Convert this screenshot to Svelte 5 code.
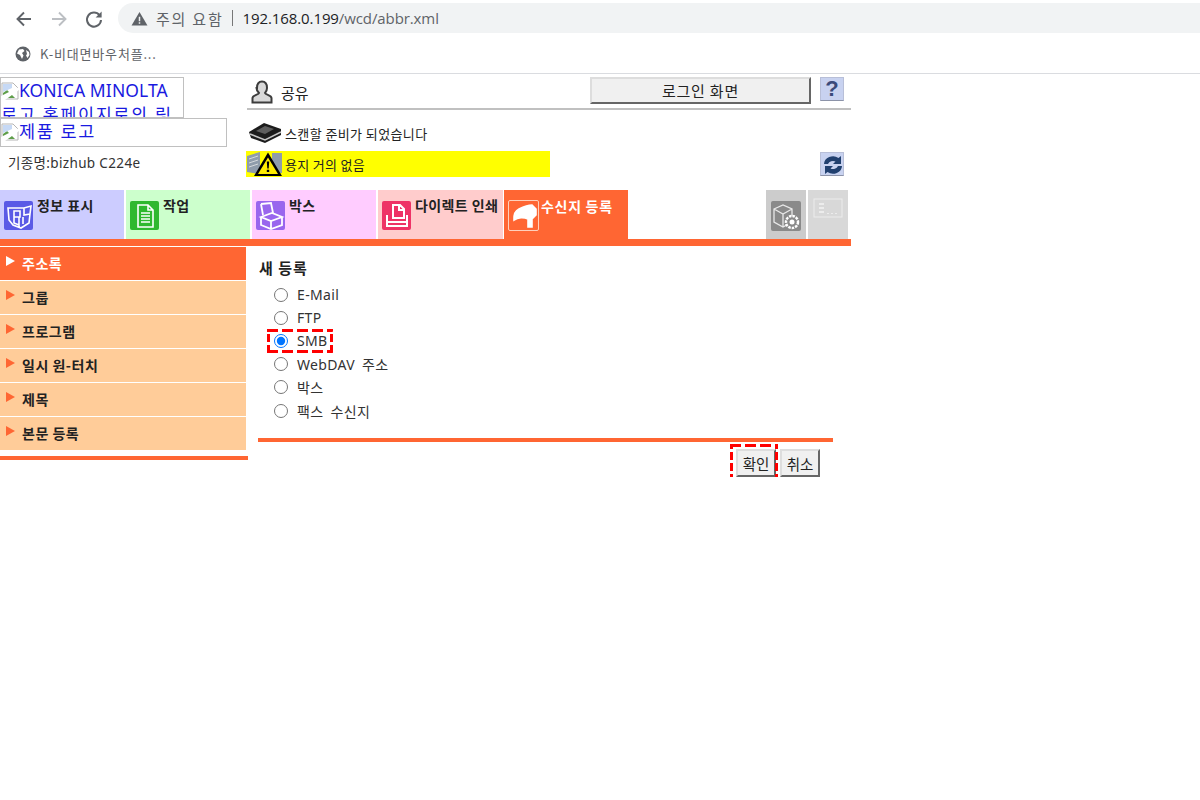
<script lang="ts">
    const tabs = [
        { label: "정보 표시", cls: "info", icon: "info" },
        { label: "작업", cls: "job", icon: "job" },
        { label: "박스", cls: "box", icon: "box" },
        { label: "다이렉트 인쇄", cls: "print", icon: "print" },
        { label: "수신지 등록", cls: "dest active", icon: "dest" },
    ];

    const menu = ["주소록", "그룹", "프로그램", "일시 원-터치", "제목", "본문 등록"];

    const destinations = [
        { label: "E-Mail", checked: false },
        { label: "FTP", checked: false },
        { label: "SMB", checked: true },
        { label: "WebDAV 주소", checked: false },
        { label: "박스", checked: false },
        { label: "팩스 수신지", checked: false },
    ];
</script>

{#snippet brokenImage()}
    <svg class="broken" viewBox="0 0 18 18" width="18" height="18" aria-hidden="true">
        <path d="M1 1h11l5 5v11H1z" fill="#fff" stroke="#b5b5b5" />
        <path d="M2 16v-5l4-3 3 3 5 5z" fill="#5f9e4a" />
        <path d="M2 2h9v4L2 10z" fill="#c6d9f5" />
        <path d="M0 14 L18 5 V8 L4 18 H0z" fill="#fff" />
    </svg>
{/snippet}

<header class="chrome">
    <div class="toolbar">
        <svg class="nav" viewBox="0 0 20 20" width="20" height="20" aria-hidden="true">
            <path d="M17 10H4M10 3.500 3.500 10l6.500 6.500" fill="none" stroke="#5f6368" stroke-width="1.900" />
        </svg>
        <svg class="nav" viewBox="0 0 20 20" width="20" height="20" aria-hidden="true">
            <path d="M3 10h13M10 3.500l6.500 6.500-6.500 6.500" fill="none" stroke="#bcbfc3" stroke-width="1.900" />
        </svg>
        <svg class="nav" viewBox="0 0 20 20" width="20" height="20" aria-hidden="true">
            <path d="M15.600 6.400A7 7 0 1 0 17 11" fill="none" stroke="#5f6368" stroke-width="2" />
            <path d="M17.600 2.600v6h-6z" fill="#5f6368" />
        </svg>
        <div class="omnibox">
            <svg viewBox="0 0 18 16" width="17" height="15" aria-hidden="true">
                <path d="M9 1 17.500 15.500H.5z" fill="#5f6368" />
                <path d="M8.200 6h1.600v5H8.200zM8.200 12h1.600v1.600H8.200z" fill="#f1f3f4" />
            </svg>
            <span class="warn">주의 요함</span>
            <span class="sep"></span>
            <span class="url">192.168.0.199<span class="path">/wcd/abbr.xml</span></span>
        </div>
    </div>
    <div class="bookmarks">
        <svg viewBox="0 0 16 16" width="16" height="16" aria-hidden="true">
            <circle cx="8" cy="8" r="7.500" fill="#5f6368" />
            <path d="M4 3.500 8 3l1.500 2L7 7l1.500 2.500L7 13 5 9 2 7.500zM11 4l3 2 .5 3-2 3-1.500-2.500L12 8z" fill="#fff" />
        </svg>
        <span>K-비대면바우처플...</span>
    </div>
</header>

<div class="page">
    <section class="top">
        <div class="brand">
            <a class="logo-box" href="#top">
                {@render brokenImage()}KONICA MINOLTA <span class="wide">로고 홈페이지로의 링크</span>
            </a>
            <a class="product-box" href="#top">{@render brokenImage()}<span class="wide">제품 로고</span></a>
            <p class="model">기종명:bizhub C224e</p>
        </div>
        <div class="status">
            <div class="user-row">
                <svg viewBox="0 0 24 24" width="24" height="24" aria-hidden="true">
                    <path d="M7 8c0-4 2-6.500 5-6.500S17 4 17 8c0 2.500-1 4-2 5 .5 2 6.500 2 6.500 5v4.500h-19V18c0-3 6-3 6.500-5-1-1-2.500-2.500-2.500-5z" fill="#d8d8d8" stroke="#3c3c3c" stroke-width="2" />
                </svg>
                <span class="user-name">공유</span>
                <button class="login" type="button">로그인 화면</button>
                <span class="square-icon help">?</span>
            </div>
            <div class="scan-row">
                <svg viewBox="0 0 34 22" width="34" height="22" aria-hidden="true">
                    <path d="M1 10 16 1l17 6v6L17 21 3 16z" fill="#1c1c1c" />
                    <path d="M2 12l15 6 16-8" fill="none" stroke="#c4c4c4" stroke-width="1.500" />
                    <path d="M8 9l9-5 9 3-9 5z" fill="#5e5e5e" />
                </svg>
                <span>스캔할 준비가 되었습니다</span>
            </div>
            <div class="alert-row">
                <div class="alert">
                    <svg viewBox="0 0 37 26" width="37" height="26" aria-hidden="true">
                        <path d="M1 5 14 1v22L1 21z" fill="#8f9cab" />
                        <path d="M3 8l9-3M3 12l9-3M3 16l9-3" stroke="#d4d8dc" fill="none" />
                        <path d="M26 2h10v20H26z" fill="#8f9cab" />
                        <path d="M22 1.500 36 25H8z" fill="#000" />
                        <path d="M22 6.500 32 23H12z" fill="#ffec00" />
                        <path d="M20.800 10.500h2.400l-.5 7h-1.400zM20.800 18.800h2.400V21h-2.400z" fill="#000" />
                    </svg>
                    <span>용지 거의 없음</span>
                </div>
                <span class="square-icon refresh">
                    <svg viewBox="0 0 24 24" width="24" height="24" aria-hidden="true">
                        <path d="M3 11a9 8 0 0 1 14.500-6L20 3v8h-8l2.500-2.500A5.500 5 0 0 0 7 11z" fill="#21406f" />
                        <path d="M21 13a9 8 0 0 1-14.500 6L4 21v-8h8l-2.500 2.500A5.500 5 0 0 0 17 13z" fill="#21406f" />
                    </svg>
                </span>
            </div>
        </div>
    </section>

    <nav class="tabs">
        {#each tabs as tab}
            <div class="tab {tab.cls}">
                <span class="tab-icon">
                    <svg viewBox="0 0 28 28" width="28" height="28" fill="none" stroke="#fff" stroke-width="1.600" aria-hidden="true">
                        {#if tab.icon === "info"}
                            <path d="M3 6h16l7-2-1 8-1 9-8 5-8-3-4-5zM19 6v7l6-1M9 9h6v6H9zM14 15v10M9 15v6l5 2M18 15v7" />
                        {:else if tab.icon === "job"}
                            <path d="M7 3h10l5 5v17H7zM10 11h9M10 14h9M10 17h9M10 20h9M17 3v5h5" />
                        {:else if tab.icon === "box"}
                            <path d="M4 2l10-1 2 10M6 13 4 2M4 15l11-4 10 4-11 4zM4 15v8l10 4 11-4v-8M14 19v8" stroke-width="1.800" />
                        {:else if tab.icon === "print"}
                            <path d="M10 3h7l4 4v9H10zM16 3v5h5M4 13v11h20V13M4 20h20" stroke-width="2" />
                        {:else}
                            <path d="M4 18c-.5-6 1-9 5-11 4-2 9-4 13-4l4 4v6l-4 4v8h-4v-8C14 15 8 15 4 18z" fill="#fff" />
                        {/if}
                    </svg>
                </span>
                <span class="tab-label">{tab.label}</span>
            </div>
        {/each}
        <div class="tab-spacer"></div>
        <div class="tab tool">
            <svg viewBox="0 0 30 30" width="30" height="30" aria-hidden="true">
                <rect width="30" height="30" rx="2" fill="#8a8a8a" />
                <path d="M3 8l9-4 9 4v13l-9 5-9-5zM3 8l9 5 9-5M12 13v13" fill="none" stroke="#e8e8e8" stroke-width="1.300" />
                <circle cx="21" cy="21" r="6" fill="#8a8a8a" stroke="#fff" stroke-width="2.500" stroke-dasharray="2.500 1" />
                <circle cx="21" cy="21" r="2.500" fill="#fff" />
            </svg>
        </div>
        <div class="tab tool">
            <svg viewBox="0 0 30 24" width="30" height="24" aria-hidden="true">
                <rect x="1" y="1" width="28" height="18" fill="none" stroke="#ececec" />
                <path d="M6 5h5v2H6zM6 9h5v2H6zM6 13h5v2H6zM14 15h2v1h-2zM18 15h2v1h-2zM22 15h2v1h-2z" fill="#ececec" />
            </svg>
        </div>
    </nav>
    <div class="tab-rule"></div>

    <section class="body">
        <aside class="side">
            <ul>
                {#each menu as item, i}
                    <li class:current={i === 0}>
                        <span class="arrow"></span>{item}
                    </li>
                {/each}
            </ul>
            <div class="side-rule"></div>
        </aside>

        <main class="content">
            <h2>새 등록</h2>
            <div class="choices">
                {#each destinations as dest}
                    <label class:marked={dest.checked}>
                        <input type="radio" name="dest" checked={dest.checked} />
                        <span>{dest.label}</span>
                    </label>
                {/each}
            </div>
            <div class="content-rule"></div>
            <div class="actions">
                <button class="marked-btn" type="button">확인</button>
                <button type="button">취소</button>
            </div>
        </main>
    </section>
</div>

<style>
    :global(body) {
        background: #fff;
        font-family: "Noto Sans CJK KR", "Noto Sans", sans-serif;
    }

    .chrome {
        height: 74px;
        border-bottom: 1px solid #dadce0;
        box-sizing: border-box;
        color: #5f6368;
    }

    .toolbar {
        height: 37px;
        display: flex;
        align-items: center;
        padding-left: 14px;
        gap: 15px;
    }

    .omnibox {
        flex: 1;
        height: 30px;
        margin: -1px 0 0 -1px;
        background: #f1f3f4;
        border-radius: 15px 0 0 15px;
        display: flex;
        align-items: center;
        padding-left: 13px;
        font-size: 15px;
    }

    .warn {
        margin-left: 8px;
        letter-spacing: 1.800px;
    }

    .sep {
        width: 1px;
        height: 16px;
        background: #777;
        margin: 0 10px 0 8px;
    }

    .url {
        font-family: "Open Sans", sans-serif;
        color: #202124;
        font-size: 15px;
        letter-spacing: -0.1px;
    }

    .path {
        color: #5f6368;
    }

    .bookmarks {
        height: 36px;
        display: flex;
        align-items: center;
        gap: 9px;
        padding: 0 0 3px 15px;
        font-size: 13px;
        letter-spacing: 0.8px;
        box-sizing: border-box;
    }

    .page {
        width: 851px;
    }

    .top {
        display: grid;
        grid-template-columns: 247px 1fr;
        height: 116px;
    }

    .brand {
        padding-top: 3px;
    }

    .logo-box,
    .product-box {
        display: block;
        box-sizing: border-box;
        border: 1px solid #c0c0c0;
        color: #1a1ae0;
        text-decoration: none;
        font-size: 17.500px;
        line-height: 24px;
        overflow: hidden;
        font-family: "Noto Sans", "Noto Sans CJK KR", sans-serif;
    }

    .logo-box {
        width: 184px;
        height: 41px;
        letter-spacing: 0.1px;
    }

    .product-box {
        width: 227px;
        height: 29px;
    }

    .wide {
        letter-spacing: 1.6px;
    }

    .broken {
        vertical-align: -3px;
    }

    .model {
        margin: 7px 0 0 8px;
        font-size: 13.500px;
        color: #333;
        line-height: 18px;
        letter-spacing: 0.35px;
        font-family: "Noto Sans", "Noto Sans CJK KR", sans-serif;
    }

    .status {
        display: flex;
        flex-direction: column;
    }

    .user-row {
        height: 33px;
        margin-top: 1px;
        display: flex;
        align-items: center;
        border-bottom: 2px solid #c0c0c0;
        padding-left: 3px;
    }

    .user-name {
        margin-left: 7px;
        font-size: 15px;
        color: #222;
        margin-top: 1px;
    }

    .login {
        margin: -2px 0 0 auto;
        width: 221px;
        height: 27px;
        background: #f0f0f0;
        border: 2px solid;
        border-color: #ddd #666 #666 #ddd;
        font: 15px "Noto Sans CJK KR", sans-serif;
        color: #222;
        letter-spacing: 0.8px;
        padding: 0;
    }

    .square-icon {
        width: 24px;
        height: 24px;
        box-sizing: border-box;
        display: grid;
        place-items: center;
        background: #c8d2f0;
        border: 1px solid #b8bfd8;
        border-bottom-color: #8c93a8;
    }

    .help {
        margin: -5px 7px 0 9px;
        font: bold 22px/1 "Liberation Sans", sans-serif;
        color: #3a4a7a;
    }

    .refresh svg {
        display: block;
    }

    .scan-row {
        display: flex;
        align-items: center;
        gap: 3px;
        height: 22px;
        margin-top: 12px;
        font-size: 13px;
        letter-spacing: 0.4px;
        color: #222;
        padding-left: 1px;
    }

    .alert-row {
        display: flex;
        justify-content: space-between;
        align-items: center;
        margin: 7px 0 0 -1px;
        padding-right: 7px;
    }

    .alert {
        width: 304px;
        height: 26px;
        background: #ffff00;
        display: flex;
        align-items: center;
        gap: 2px;
        font-size: 13px;
        letter-spacing: 0.3px;
        color: #222;
    }

    .tabs {
        display: flex;
        height: 49px;
        padding-right: 3px;
    }

    .tab {
        width: 124px;
        margin-right: 2px;
        display: flex;
        align-items: flex-start;
        gap: 4px;
        padding: 11px 0 0 4px;
        box-sizing: border-box;
        font-size: 14px;
        font-weight: 700;
        color: #222;
    }

    .tab-label {
        margin-top: -6px;
        letter-spacing: 0.4px;
        white-space: nowrap;
    }

    .tab-icon {
        width: 29px;
        height: 29px;
        border-radius: 2px;
        display: grid;
        place-items: center;
    }

    .info {
        background: #ccccff;
    }

    .info .tab-icon {
        background: #5a5ae6;
    }

    .job {
        background: #ccffcc;
    }

    .job .tab-icon {
        background: #2fb82f;
    }

    .box {
        background: #ffccff;
    }

    .box .tab-icon {
        background: #9966ee;
    }

    .print {
        background: #ffcccc;
        width: 125px;
        margin-right: 1px;
    }

    .print .tab-icon {
        background: #ee3366;
    }

    .dest {
        background: #ff6633;
        color: #fff;
    }

    .dest .tab-icon {
        width: 31px;
        height: 31px;
        margin-top: -1px;
        border: 1px solid #ffd0bb;
        box-sizing: border-box;
    }

    .dest .tab-label {
        margin-left: -2px;
        margin-top: -5px;
        letter-spacing: 0.7px;
    }

    .tab-spacer {
        flex: 1;
    }

    .tool {
        width: 40px;
        background: #cccccc;
        padding: 11px 0 0 5px;
    }

    .tool:last-child {
        margin-right: 0;
        background: #d8d8d8;
        padding-top: 8px;
    }

    .tab-rule {
        height: 7px;
        background: #ff6633;
    }

    .body {
        display: grid;
        grid-template-columns: 248px 1fr;
    }

    .side {
        padding-top: 1px;
    }

    .side ul {
        list-style: none;
        margin: 0;
        padding: 0;
        width: 246px;
    }

    .side li {
        height: 33px;
        margin-bottom: 1px;
        background: #ffcc99;
        display: flex;
        align-items: center;
        padding: 0 0 2px 6px;
        box-sizing: border-box;
        font-size: 14px;
        font-weight: 700;
        color: #222;
        letter-spacing: 0.5px;
    }

    .side li.current {
        background: #ff6633;
        color: #fff;
    }

    .arrow {
        width: 0;
        height: 0;
        border-left: 9px solid #ff6633;
        border-top: 5px solid transparent;
        border-bottom: 5px solid transparent;
        margin: -3px 7px 0 0;
    }

    .current .arrow {
        border-left-color: #fff;
    }

    .side-rule {
        height: 4px;
        margin-top: 6px;
        background: #ff6633;
    }

    .content {
        padding: 12px 18px 0 10px;
        color: #333;
    }

    h2 {
        margin: 0;
        font-size: 15px;
        font-weight: 700;
        line-height: 20px;
        color: #222;
        letter-spacing: 1px;
        padding-left: 1px;
    }

    .choices {
        display: flex;
        flex-direction: column;
        margin-top: 5px;
        padding-left: 16px;
    }

    label {
        position: relative;
        height: 23.200px;
        display: flex;
        align-items: center;
        gap: 9px;
        font-size: 14px;
        letter-spacing: 0.35px;
        word-spacing: 3px;
        width: max-content;
        font-family: "Noto Sans", "Noto Sans CJK KR", sans-serif;
    }

    label input {
        width: 14px;
        height: 14px;
        margin: 0;
        accent-color: #0075ff;
    }

    label.marked::after,
    .marked-btn::after {
        content: "";
        position: absolute;
        background:
            repeating-linear-gradient(90deg, #f00 0 11px, transparent 11px 15px) top / 100% 3px no-repeat,
            repeating-linear-gradient(90deg, #f00 0 11px, transparent 11px 15px) bottom / 100% 3px no-repeat,
            repeating-linear-gradient(0deg, #f00 0 8px, transparent 8px 11px) left / 3px 100% no-repeat,
            repeating-linear-gradient(0deg, #f00 0 8px, transparent 8px 11px) right / 3px 100% no-repeat;
    }

    label.marked::after {
        inset: 0 -5px 0 -7px;
    }

    .content-rule {
        height: 4px;
        margin-top: 16px;
        background: #ff6633;
    }

    .actions {
        display: flex;
        justify-content: flex-end;
        gap: 4px;
        margin-top: 7px;
        padding-right: 13px;
    }

    .actions button {
        position: relative;
        width: 40px;
        height: 28px;
        padding: 0;
        background: #f0f0f0;
        border: 2px solid;
        border-color: #ddd #666 #666 #ddd;
        font: 14.500px "Noto Sans CJK KR", sans-serif;
        color: #222;
    }

    .actions .marked-btn::after {
        inset: -7px -4px -7px -8px;
    }
</style>
